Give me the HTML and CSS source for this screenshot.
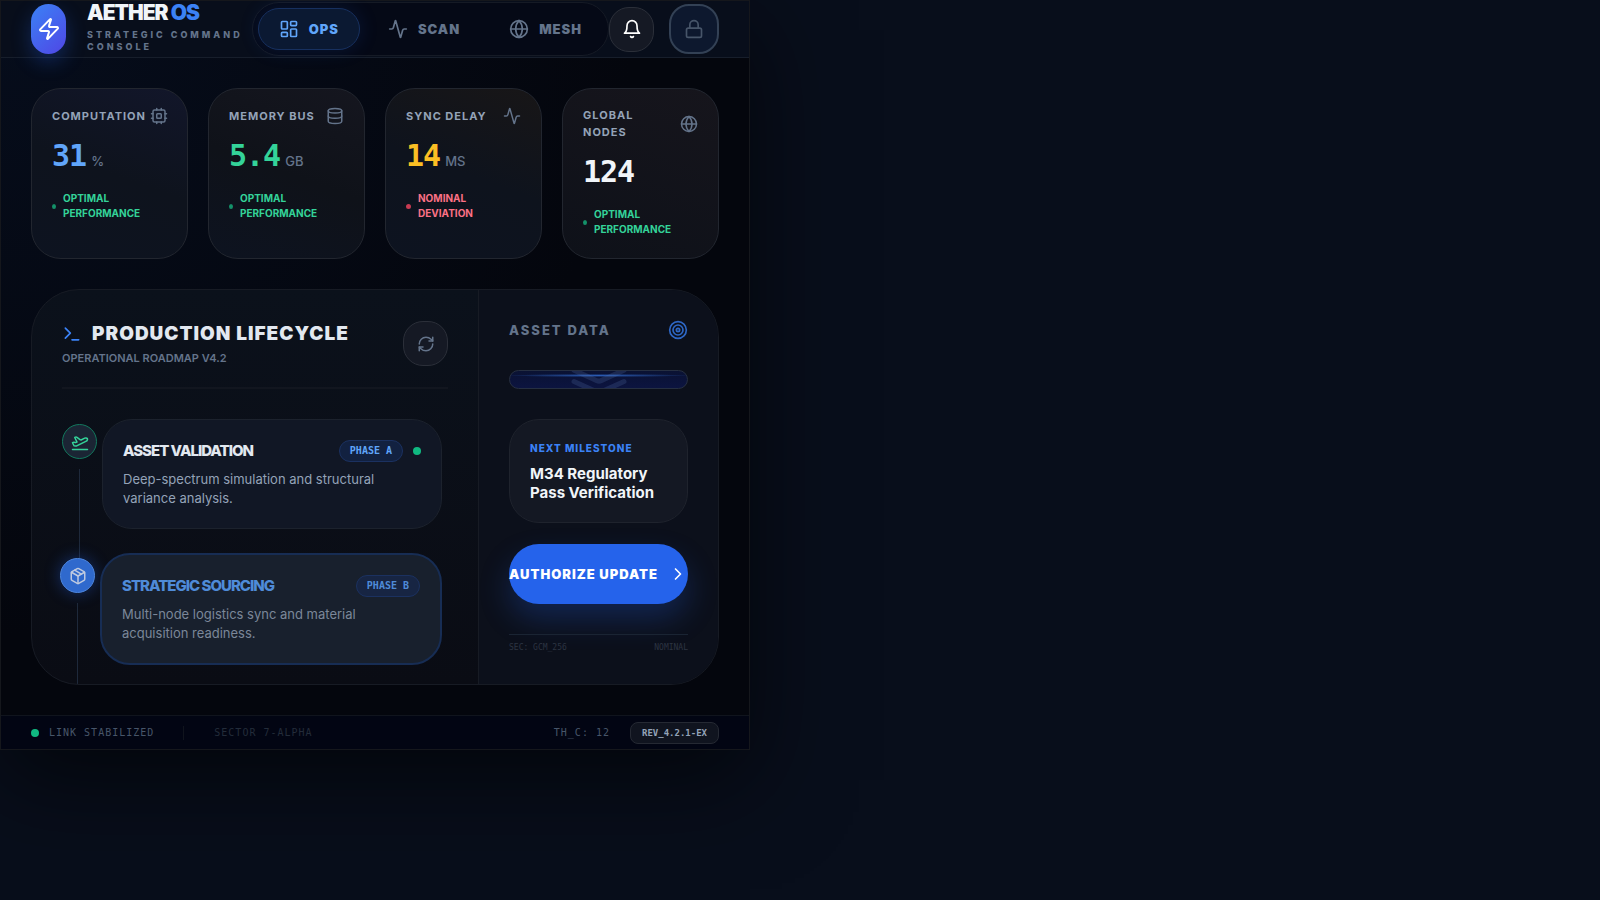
FILE: index.html
```html
<!DOCTYPE html>
<html lang="en">
<head>
    <meta charset="UTF-8">
    <meta name="viewport" content="width=device-width, initial-scale=1.0">
    <title>Aether OS</title>
    <link rel="stylesheet" href="styles.css">
</head>
<body>
    <div class="console">
        <header class="topbar">
            <div class="brand">
                <div class="logo">
                    <svg class="icon" width="24" height="24" viewBox="0 0 24 24"><path d="M4 14a1 1 0 0 1-.78-1.63l9.9-10.2a.5.5 0 0 1 .86.46l-1.92 6.02A1 1 0 0 0 13 10h7a1 1 0 0 1 .78 1.63l-9.9 10.2a.5.5 0 0 1-.86-.46l1.92-6.02A1 1 0 0 0 11 14z"/></svg>
                </div>
                <div class="brand-text">
                    <h1>AETHER <span>OS</span></h1>
                    <p>STRATEGIC COMMAND CONSOLE</p>
                </div>
            </div>
            <nav class="tabs">
                <button type="button" class="tab active">
                    <svg class="icon" width="20" height="20" viewBox="0 0 24 24"><rect width="7" height="9" x="3" y="3" rx="1"/><rect width="7" height="5" x="14" y="3" rx="1"/><rect width="7" height="9" x="14" y="12" rx="1"/><rect width="7" height="5" x="3" y="16" rx="1"/></svg>
                    OPS
                </button>
                <button type="button" class="tab">
                    <svg class="icon" width="20" height="20" viewBox="0 0 24 24"><path d="M22 12h-2.48a2 2 0 0 0-1.93 1.46l-2.35 8.36a.25.25 0 0 1-.48 0L9.24 2.18a.25.25 0 0 0-.48 0l-2.35 8.36A2 2 0 0 1 4.49 12H2"/></svg>
                    SCAN
                </button>
                <button type="button" class="tab">
                    <svg class="icon" width="20" height="20" viewBox="0 0 24 24"><circle cx="12" cy="12" r="10"/><path d="M12 2a14.5 14.5 0 0 0 0 20 14.5 14.5 0 0 0 0-20"/><path d="M2 12h20"/></svg>
                    MESH
                </button>
            </nav>
            <div class="actions">
                <button type="button" class="round-btn bell" aria-label="Notifications">
                    <svg class="icon" width="20" height="20" viewBox="0 0 24 24"><path d="M6 8a6 6 0 0 1 12 0c0 7 3 9 3 9H3s3-2 3-9"/><path d="M10.3 21a1.94 1.94 0 0 0 3.4 0"/></svg>
                </button>
                <button type="button" class="round-btn lock" aria-label="Lock">
                    <svg class="icon" width="20" height="20" viewBox="0 0 24 24"><rect width="18" height="11" x="3" y="11" rx="2"/><path d="M7 11V7a5 5 0 0 1 10 0v4"/></svg>
                </button>
            </div>
        </header>

        <main class="content">
            <section class="stats">
                <article class="stat blue">
                    <div class="stat-head">
                        <h2>COMPUTATION</h2>
                        <svg class="icon" width="18" height="18" viewBox="0 0 24 24"><rect width="16" height="16" x="4" y="4" rx="2"/><rect width="6" height="6" x="9" y="9" rx="1"/><path d="M15 2v2M15 20v2M2 15h2M2 9h2M20 15h2M20 9h2M9 2v2M9 20v2"/></svg>
                    </div>
                    <p class="value">31<small>%</small></p>
                    <p class="status"><i></i>OPTIMAL PERFORMANCE</p>
                </article>
                <article class="stat green">
                    <div class="stat-head">
                        <h2>MEMORY BUS</h2>
                        <svg class="icon" width="18" height="18" viewBox="0 0 24 24"><ellipse cx="12" cy="5" rx="9" ry="3"/><path d="M3 5v14a9 3 0 0 0 18 0V5"/><path d="M3 12a9 3 0 0 0 18 0"/></svg>
                    </div>
                    <p class="value">5.4<small>GB</small></p>
                    <p class="status"><i></i>OPTIMAL PERFORMANCE</p>
                </article>
                <article class="stat amber">
                    <div class="stat-head">
                        <h2>SYNC DELAY</h2>
                        <svg class="icon" width="18" height="18" viewBox="0 0 24 24"><path d="M22 12h-2.48a2 2 0 0 0-1.93 1.46l-2.35 8.36a.25.25 0 0 1-.48 0L9.24 2.18a.25.25 0 0 0-.48 0l-2.35 8.36A2 2 0 0 1 4.49 12H2"/></svg>
                    </div>
                    <p class="value">14<small>MS</small></p>
                    <p class="status warn"><i></i>NOMINAL DEVIATION</p>
                </article>
                <article class="stat white">
                    <div class="stat-head">
                        <h2>GLOBAL NODES</h2>
                        <svg class="icon" width="18" height="18" viewBox="0 0 24 24"><circle cx="12" cy="12" r="10"/><path d="M12 2a14.5 14.5 0 0 0 0 20 14.5 14.5 0 0 0 0-20"/><path d="M2 12h20"/></svg>
                    </div>
                    <p class="value">124</p>
                    <p class="status"><i></i>OPTIMAL PERFORMANCE</p>
                </article>
            </section>

            <section class="panel">
                <div class="lifecycle">
                    <div class="section-head">
                        <div>
                            <h2><svg class="icon" width="20" height="20" viewBox="0 0 24 24"><path d="m4 17 6-6-6-6"/><path d="M12 19h8"/></svg>PRODUCTION LIFECYCLE</h2>
                            <p>OPERATIONAL ROADMAP V4.2</p>
                        </div>
                        <button type="button" class="round-btn refresh" aria-label="Refresh">
                            <svg class="icon" width="18" height="18" viewBox="0 0 24 24"><path d="M3 12a9 9 0 0 1 9-9 9.75 9.75 0 0 1 6.74 2.74L21 8"/><path d="M21 3v5h-5"/><path d="M21 12a9 9 0 0 1-9 9 9.75 9.75 0 0 1-6.74-2.74L3 16"/><path d="M8 16H3v5"/></svg>
                        </button>
                    </div>
                    <ol class="timeline">
                        <li class="step done">
                            <div class="rail">
                                <span class="node"><svg class="icon" width="18" height="18" viewBox="0 0 24 24"><path d="M2 22h20"/><path d="M6.36 17.4 4 17l-2-4 1.1-.55a2 2 0 0 1 1.8 0l.17.1a2 2 0 0 0 1.8 0L8 12 5 6l.9-.45a2 2 0 0 1 2.09.2l4.02 3a2 2 0 0 0 2.1.2l4.19-2.06a2.41 2.41 0 0 1 1.73-.17L21 7a1.4 1.4 0 0 1 .87 1.99l-.38.76c-.23.46-.6.84-1.07 1.08L7.58 17.2a2 2 0 0 1-1.22.18Z"/></svg></span>
                            </div>
                            <div class="step-card">
                                <div class="step-head">
                                    <h3>ASSET VALIDATION</h3>
                                    <span class="phase">PHASE A</span>
                                    <span class="dot"></span>
                                </div>
                                <p>Deep-spectrum simulation and structural variance analysis.</p>
                            </div>
                        </li>
                        <li class="step current">
                            <div class="rail">
                                <span class="node"><svg class="icon" width="18" height="18" viewBox="0 0 24 24"><path d="m7.5 4.27 9 5.15"/><path d="M21 8a2 2 0 0 0-1-1.73l-7-4a2 2 0 0 0-2 0l-7 4A2 2 0 0 0 3 8v8a2 2 0 0 0 1 1.73l7 4a2 2 0 0 0 2 0l7-4A2 2 0 0 0 21 16Z"/><path d="m3.3 7 8.7 5 8.7-5"/><path d="M12 22V12"/></svg></span>
                            </div>
                            <div class="step-card">
                                <div class="step-head">
                                    <h3>STRATEGIC SOURCING</h3>
                                    <span class="phase">PHASE B</span>
                                </div>
                                <p>Multi-node logistics sync and material acquisition readiness.</p>
                            </div>
                        </li>
                    </ol>
                </div>

                <aside class="asset">
                    <div class="asset-head">
                        <h2>ASSET DATA</h2>
                        <svg class="icon" width="20" height="20" viewBox="0 0 24 24"><circle cx="12" cy="12" r="10"/><circle cx="12" cy="12" r="6"/><circle cx="12" cy="12" r="2"/></svg>
                    </div>
                    <div class="scanner">
                        <svg class="icon" width="60" height="60" viewBox="0 0 24 24"><path d="m22 12.5-9.17 4.16a2 2 0 0 1-1.66 0L2 12.5"/><path d="m22 17-9.17 4.16a2 2 0 0 1-1.66 0L2 17"/></svg>
                    </div>
                    <div class="milestone">
                        <h3>NEXT MILESTONE</h3>
                        <p>M34 Regulatory Pass Verification</p>
                    </div>
                    <button type="button" class="authorize">
                        AUTHORIZE UPDATE
                        <svg class="icon" width="20" height="20" viewBox="0 0 24 24"><path d="m9 18 6-6-6-6"/></svg>
                    </button>
                    <div class="asset-foot">
                        <span>SEC: GCM_256</span>
                        <span>NOMINAL</span>
                    </div>
                </aside>
            </section>
        </main>

        <footer class="statusbar">
            <span class="dot"></span>
            <span class="link">LINK STABILIZED</span>
            <span class="sector">SECTOR 7-ALPHA</span>
            <span class="threads">TH_C: 12</span>
            <span class="rev">REV_4.2.1-EX</span>
        </footer>
    </div>
</body>
</html>
```

FILE: styles.css
```css
* {
    box-sizing: border-box;
    margin: 0;
    padding: 0;
}
body {
    min-height: 100vh;
    background: #080e1b;
    color: #f1f5f9;
    font-family: Inter, "Liberation Sans", sans-serif;
    overflow-x: hidden;
}
button {
    font-family: inherit;
    cursor: pointer;
}
.icon {
    display: block;
    flex-shrink: 0;
    fill: none;
    stroke: currentColor;
    stroke-width: 2;
    stroke-linecap: round;
    stroke-linejoin: round;
}
.console {
    max-width: 750px;
    border: 1px solid #15171c;
    background: radial-gradient(circle at 0% 0%, #060d1c, transparent 60%), #04060d;
    box-shadow: 0 30px 90px rgba(0, 0, 0, 0.6);
}

/* top bar */
.topbar {
    display: flex;
    align-items: center;
    height: 57px;
    padding: 0 30px;
    background: #080e1b;
    border-bottom: 1px solid #171e2b;
}
.brand {
    display: flex;
    align-items: center;
    flex: 1;
    gap: 21px;
}
.logo {
    display: flex;
    align-items: center;
    justify-content: center;
    width: 35px;
    height: 50px;
    flex-shrink: 0;
    border-radius: 18px;
    background: linear-gradient(135deg, #3b82f6, #4f46e5);
    box-shadow: 0 8px 20px rgba(37, 99, 235, 0.3);
    color: #fff;
}
.brand-text {
    padding-bottom: 4px;
}
.brand h1 {
    font-size: 21px;
    line-height: 24px;
    font-weight: 900;
    letter-spacing: -1px;
    white-space: nowrap;
}
.brand h1 span {
    color: #3b82f6;
}
.brand p {
    margin-top: 4px;
    font-size: 9px;
    line-height: 12px;
    font-weight: 800;
    letter-spacing: 3px;
    color: #64748b;
}
.tabs {
    display: flex;
    gap: 7px;
    padding: 5px;
    border: 1px solid #151a25;
    border-radius: 27px;
    background: #050916;
}
.tab {
    display: flex;
    align-items: center;
    gap: 10px;
    height: 42px;
    padding: 0 20px;
    border: 1px solid transparent;
    border-radius: 21px;
    background: none;
    color: #64748b;
    font-size: 13px;
    font-weight: 900;
    letter-spacing: 1px;
}
.tab.active {
    border-color: #17305f;
    background: #0b1932;
    box-shadow: 0 0 20px rgba(37, 99, 235, 0.15);
    color: #60a5fa;
}
.actions {
    display: flex;
    align-items: center;
    gap: 15px;
}
.round-btn {
    display: flex;
    align-items: center;
    justify-content: center;
    width: 45px;
    height: 45px;
    flex-shrink: 0;
    border: 1px solid #2b2f39;
    border-radius: 20px;
    background: #151924;
    color: #64748b;
}
.bell {
    color: #fff;
}
.lock {
    width: 50px;
    height: 50px;
    border: 2px solid #334155;
    background: #0d182e;
    color: #475569;
}

/* stat cards */
.content {
    padding: 30px;
}
.stats {
    display: grid;
    grid-template-columns: repeat(4, minmax(0, 1fr));
    gap: 20px;
}
.stat {
    min-height: 171px;
    padding: 18px 20px;
    border: 1px solid #22262f;
    border-radius: 30px;
    background: linear-gradient(200deg, #15161f, #0f1219 50%, #0d1320);
}
.stat.blue {
    background: linear-gradient(200deg, #12162a, #0e131d 50%, #0d1320);
}
.stat.amber {
    background: linear-gradient(200deg, #181617, #0e131d 50%, #0d1320);
}
.stat.white {
    background: linear-gradient(200deg, #16151c, #0e1119);
}
.stat-head {
    display: flex;
    align-items: center;
    justify-content: space-between;
    gap: 4px;
    color: #64748b;
}
.stat h2 {
    font-size: 11px;
    line-height: 17px;
    font-weight: 700;
    letter-spacing: 1px;
    color: #94a3b8;
}
.value {
    display: flex;
    align-items: baseline;
    gap: 5px;
    margin-top: 11px;
    font-family: "DejaVu Sans Mono", monospace;
    font-size: 30px;
    line-height: 40px;
    font-weight: 700;
    letter-spacing: -1px;
    white-space: nowrap;
}
.value small {
    font-family: Inter, "Liberation Sans", sans-serif;
    font-size: 13px;
    line-height: 20px;
    font-weight: 500;
    letter-spacing: 0;
    color: #64748b;
}
.blue .value { color: #60a5fa; }
.green .value { color: #34d399; }
.amber .value { color: #fbbf24; }
.status {
    display: flex;
    align-items: center;
    gap: 7px;
    margin-top: 15px;
    font-size: 10px;
    line-height: 15px;
    font-weight: 700;
    color: #34d399;
}
.status i {
    width: 4px;
    height: 5px;
    flex-shrink: 0;
    border-radius: 50%;
    background: #149169;
}
.status.warn {
    color: #fb7185;
}
.status.warn i {
    width: 5px;
    background: #c73a52;
}

/* main panel */
.panel {
    display: flex;
    margin-top: 30px;
    overflow: hidden;
    border: 1px solid #171b24;
    border-radius: 48px;
    background: linear-gradient(180deg, #0b111b, #0a0c14);
}
.lifecycle {
    display: flex;
    flex-direction: column;
    flex: 1;
    padding: 31px 30px 0;
}
.section-head {
    display: flex;
    align-items: center;
    justify-content: space-between;
    padding-bottom: 21px;
    border-bottom: 2px solid #12161f;
}
.section-head h2 {
    display: flex;
    align-items: center;
    gap: 10px;
    font-size: 19px;
    line-height: 24px;
    font-weight: 900;
    letter-spacing: 1px;
    color: #e2e8f0;
}
.section-head h2 .icon {
    color: #3b82f6;
}
.section-head p {
    margin-top: 4px;
    font-size: 11px;
    line-height: 16px;
    font-weight: 600;
    color: #64748b;
}
.timeline {
    display: flex;
    flex-direction: column;
    flex: 1;
    gap: 24px;
    margin-top: 30px;
    padding-right: 6px;
    list-style: none;
}
.step {
    display: flex;
    gap: 5px;
}
.rail {
    display: flex;
    flex-direction: column;
    align-items: center;
    margin: 5px 0 -29px;
}
.rail::after {
    content: "";
    width: 1px;
    flex: 1;
    margin-top: 10px;
    background: #1e293b;
}
.node {
    display: flex;
    align-items: center;
    justify-content: center;
    width: 35px;
    height: 35px;
    border: 1px solid #12785d;
    border-radius: 50%;
    background: #1b2534;
    color: #34d399;
}
.step-card {
    flex: 1;
    padding: 20px;
    border: 1px solid #1c222d;
    border-radius: 30px;
    background: #111725;
}
.step-head {
    display: flex;
    align-items: center;
    gap: 10px;
}
.step h3 {
    flex: 1;
    font-size: 15px;
    line-height: 20px;
    font-weight: 800;
    letter-spacing: -1px;
    color: #e2e8f0;
}
.phase {
    padding: 2px 10px;
    border: 1px solid #1b3160;
    border-radius: 11px;
    background: #122140;
    color: #60a5fa;
    font-family: "DejaVu Sans Mono", monospace;
    font-size: 10px;
    line-height: 16px;
    font-weight: 700;
}
.dot {
    width: 8px;
    height: 8px;
    flex-shrink: 0;
    border-radius: 50%;
    background: #10b981;
}
.step p {
    margin-top: 8px;
    font-size: 13px;
    line-height: 19px;
    font-weight: 400;
    color: #94a3b8;
}
.current {
    margin-left: -2px;
    padding-bottom: 19px;
}
.current .rail {
    margin-bottom: -19px;
}
.current .node {
    border-color: #4d86dd;
    background: #2f69cd;
    box-shadow: 0 0 16px rgba(37, 99, 235, 0.4);
    color: #bdc9e0;
}
.current .step-card {
    border: 2px solid #172d54;
    background: #18202d;
}
.current h3 {
    color: #4f8bd8;
}
.current .phase {
    color: #4f8bd8;
    background: #172543;
}
.current p {
    color: #7b8799;
}

/* asset column */
.asset {
    width: 240px;
    padding: 30px 30px 24px;
    border-left: 1px solid #171b24;
    background: #0c101b;
}
.asset-head {
    display: flex;
    align-items: center;
    justify-content: space-between;
    color: #2d66c4;
}
.asset-head h2 {
    font-size: 13px;
    line-height: 20px;
    font-weight: 800;
    letter-spacing: 2px;
    color: #64748b;
}
.scanner {
    display: flex;
    align-items: flex-end;
    justify-content: center;
    height: 19px;
    margin-top: 30px;
    overflow: hidden;
    border: 1px solid #262f42;
    border-radius: 10px;
    background: radial-gradient(ellipse at 50% 50%, #2a5cb4, transparent 75%) 0 3px / 100% 3px no-repeat, linear-gradient(#0a1233, #0c1440);
}
.scanner .icon {
    margin-bottom: -11px;
    color: rgba(100, 130, 190, 0.2);
}
.milestone {
    margin-top: 30px;
    padding: 20px;
    border: 1px solid #1f232d;
    border-radius: 30px;
    background: #141823;
}
.milestone h3 {
    font-size: 10px;
    line-height: 16px;
    font-weight: 800;
    letter-spacing: 1px;
    color: #3b82f6;
}
.milestone p {
    margin-top: 8px;
    font-size: 15px;
    line-height: 19px;
    font-weight: 700;
    color: #f1f5f9;
}
.authorize {
    display: flex;
    align-items: center;
    justify-content: center;
    gap: 10px;
    width: 100%;
    height: 60px;
    margin-top: 21px;
    border: none;
    border-radius: 30px;
    background: #2563eb;
    box-shadow: 0 15px 30px rgba(37, 99, 235, 0.25);
    color: #fff;
    font-size: 13px;
    font-weight: 900;
    letter-spacing: 1px;
    white-space: nowrap;
}
.asset-foot {
    display: flex;
    justify-content: space-between;
    margin-top: 30px;
    padding-top: 7px;
    border-top: 1px solid #1a2433;
    font-family: "DejaVu Sans Mono", monospace;
    font-size: 8px;
    line-height: 12px;
    color: #2c3442;
}

/* bottom status bar */
.statusbar {
    display: flex;
    align-items: center;
    height: 34px;
    padding: 0 30px;
    border-top: 1px solid #10141d;
    background: #020513;
    font-family: "DejaVu Sans Mono", monospace;
    font-size: 10px;
    line-height: 14px;
    letter-spacing: 1px;
    color: #475569;
}
.link {
    margin-left: 10px;
    padding-right: 29px;
}
.sector {
    padding-left: 30px;
    border-left: 1px solid #10141d;
    color: #232c3a;
}
.threads {
    margin-left: auto;
}
.rev {
    margin-left: 20px;
    padding: 3px 11px;
    border: 1px solid #252933;
    border-radius: 8px;
    background: #10141f;
    color: #94a3b8;
    font-size: 9px;
    font-weight: 700;
    letter-spacing: 0;
}
```
